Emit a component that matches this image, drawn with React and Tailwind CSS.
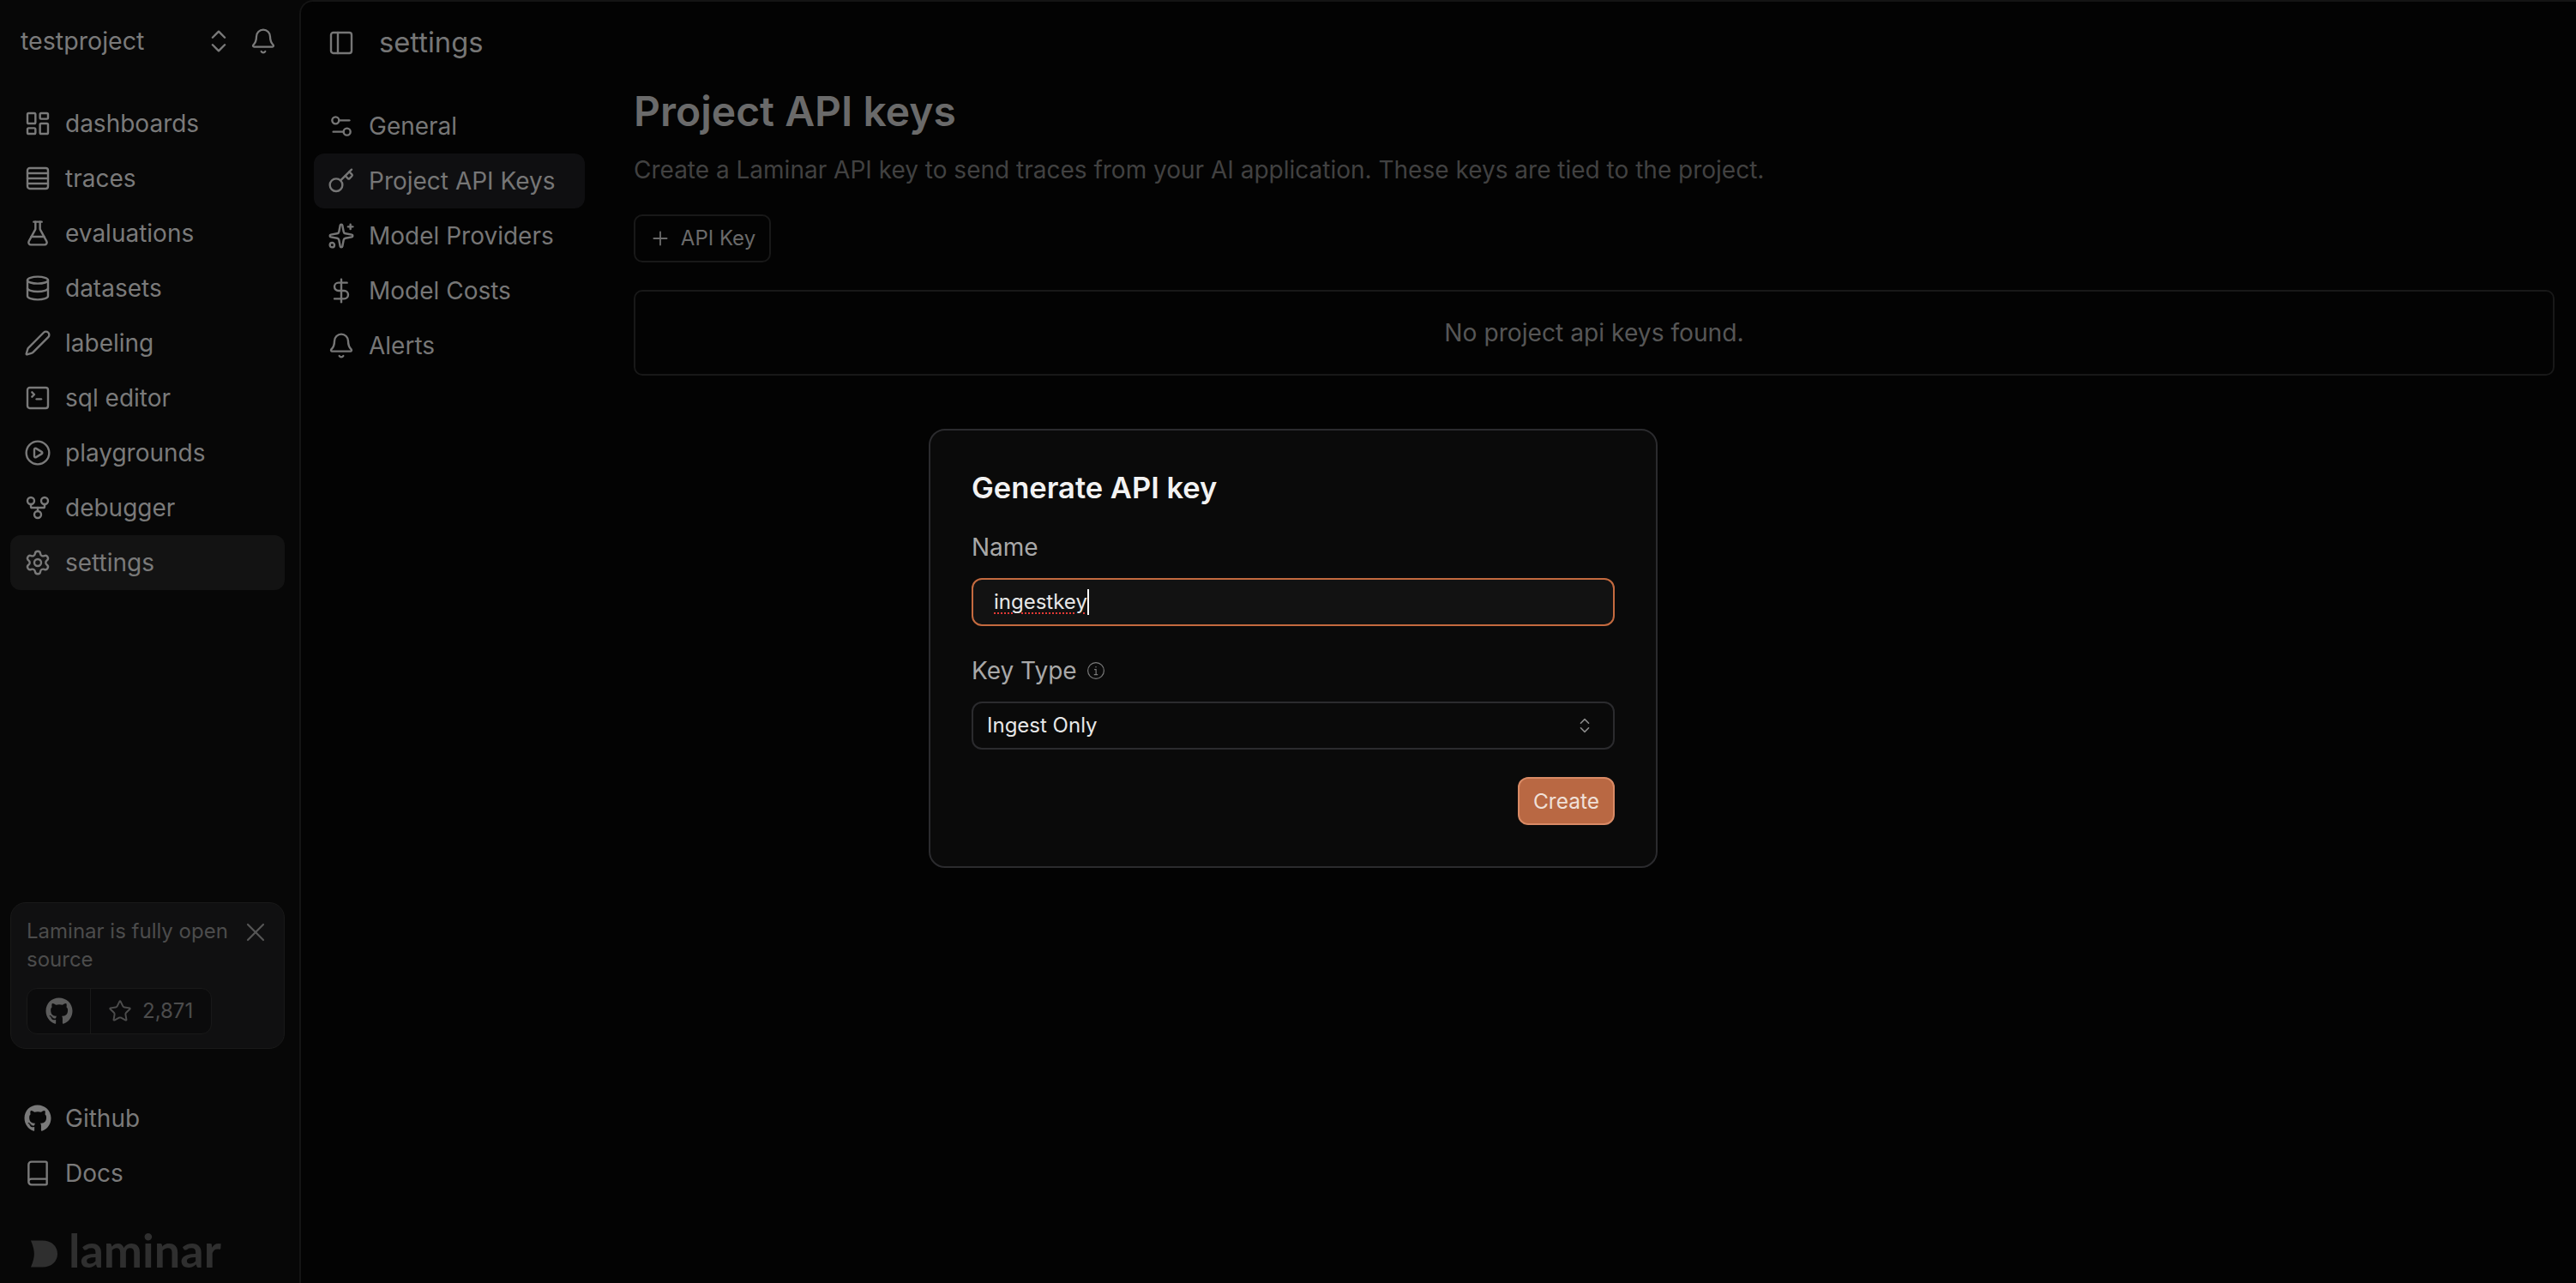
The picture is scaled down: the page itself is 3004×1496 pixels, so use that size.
import React from 'react';
import {
  LayoutDashboard, Rows4, FlaskConical, Database, Pen, SquareTerminal, CirclePlay, GitFork, Settings,
  Settings2, Key, Sparkles, DollarSign, Bell, PanelLeft, ChevronsUpDown, X, Star, Book, Plus,
} from 'lucide-react';
import { FaGithub } from 'react-icons/fa';

const navItems = [
  { label: 'dashboards', icon: LayoutDashboard },
  { label: 'traces', icon: Rows4 },
  { label: 'evaluations', icon: FlaskConical },
  { label: 'datasets', icon: Database },
  { label: 'labeling', icon: Pen },
  { label: 'sql editor', icon: SquareTerminal },
  { label: 'playgrounds', icon: CirclePlay },
  { label: 'debugger', icon: GitFork },
  { label: 'settings', icon: Settings, active: true },
];

const settingsItems = [
  { label: 'General', icon: Settings2 },
  { label: 'Project API Keys', icon: Key, active: true },
  { label: 'Model Providers', icon: Sparkles },
  { label: 'Model Costs', icon: DollarSign },
  { label: 'Alerts', icon: Bell },
];

function InfoIcon() {
  return (
    <svg width="22" height="22" viewBox="0 0 15 15" fill="none" stroke="currentColor" strokeWidth="0.8" className="text-[#7a7a7a]">
      <circle cx="7.5" cy="7.5" r="6.4" />
      <circle cx="7.5" cy="4.6" r="0.5" fill="currentColor" stroke="none" />
      <path d="M6.2 6.6h1.4v3.9M6 10.6h3" />
    </svg>
  );
}

function Sidebar() {
  return (
    <aside className="w-[349px] shrink-0 h-full flex flex-col bg-[#070707] text-[#7a7a7a]">
      <div className="h-[96px] flex items-center pl-[24px] pr-[26px]">
        <span className="text-[28.6px] flex-1">testproject</span>
        <ChevronsUpDown size={34} strokeWidth={1.7} className="mr-[19px]" />
        <Bell size={32} strokeWidth={1.7} />
      </div>
      <nav className="mt-[16px] px-[12px] flex flex-col">
        {navItems.map((item) => (
          <div
            key={item.label}
            className={`h-[64px] w-[320px] flex items-center gap-[16px] pl-[16px] rounded-[12px] text-[28px] ${item.active ? 'bg-[#131313]' : ''}`}
          >
            <item.icon size={32} strokeWidth={1.8} />
            <span>{item.label}</span>
          </div>
        ))}
      </nav>
      <div className="mt-auto">
        <div className="relative mx-[12px] w-[320px] h-[171px] rounded-[18px] border border-[#191919] bg-[#101011] px-[18px] pt-[16px]">
          <p className="text-[24px] leading-[33px] text-[#4c4c4c] w-[268px]">Laminar is fully open source</p>
          <X size={36} strokeWidth={1.5} className="absolute right-[15px] top-[16px] text-[#555]" />
          <div className="mt-[17px] w-[216px] h-[54px] flex items-center rounded-[12px] border border-[#191919] bg-[#0b0b0c] text-[#4c4c4c]">
            <div className="w-[74px] h-full flex items-center justify-center border-r border-[#191919]">
              <FaGithub size={32} className="text-[#5c5c5c]" />
            </div>
            <div className="flex items-center gap-[12px] pl-[20px] text-[24px]">
              <Star size={28} strokeWidth={1.7} />
              <span>2,871</span>
            </div>
          </div>
        </div>
        <div className="mt-[49px] px-[28px] flex flex-col">
          <div className="h-[64px] flex items-center gap-[16px] text-[28px]">
            <FaGithub size={32} />
            <span>Github</span>
          </div>
          <div className="h-[64px] flex items-center gap-[16px] text-[28px]">
            <Book size={32} strokeWidth={1.8} />
            <span>Docs</span>
          </div>
        </div>
        <div className="h-[96px] pl-[35px] pb-[11px] flex items-end gap-[12px] text-[#2f2f2f]">
          <svg width="33" height="34" viewBox="0 0 34 34" fill="currentColor" className="mb-[6px]">
            <path d="M1 1 H15 C26 1 33 8 33 17 C33 26 26 33 15 33 H1 C4 26 5 21 5 17 C5 13 4 8 1 1 Z" />
          </svg>
          <span className="text-[54px] leading-[54px] font-bold font-['Lato',sans-serif]">laminar</span>
        </div>
      </div>
    </aside>
  );
}

function SettingsNav() {
  return (
    <div className="w-[388px] shrink-0 pl-[15px] pt-[17px] flex flex-col">
      {settingsItems.map((item) => (
        <div
          key={item.label}
          className={`h-[64px] w-[316px] flex items-center gap-[16px] pl-[16px] rounded-[12px] text-[28px] text-[#767676] ${item.active ? 'bg-[#0f0f11]' : ''}`}
        >
          <item.icon size={32} strokeWidth={1.8} />
          <span>{item.label}</span>
        </div>
      ))}
    </div>
  );
}

function Content() {
  return (
    <div className="flex-1 pr-[25px] flex flex-col">
      <h1 className="text-[48px] leading-[64px] font-semibold text-[#6a6a6a]">Project API keys</h1>
      <p className="mt-[17px] text-[28px] leading-[38px] text-[#414141]">
        Create a Laminar API key to send traces from your AI application. These keys are tied to the project.
      </p>
      <button className="mt-[33px] w-[160px] h-[56px] flex items-center justify-center gap-[11px] rounded-[10px] border-2 border-[#181818] text-[#6a6a6a] text-[24px]">
        <Plus size={26} strokeWidth={1.7} />
        API Key
      </button>
      <div className="mt-[32px] h-[100px] rounded-[10px] border-2 border-[#181818] flex items-center justify-center text-[28.2px] text-[#565656]">
        No project api keys found.
      </div>
    </div>
  );
}

function ApiKeyDialog() {
  return (
    <div className="absolute left-[1083px] top-[500px] w-[850px] h-[512px] rounded-[19px] border-2 border-[#2b2b2e] bg-[#0a0a0a] px-[48px] pt-[44px]">
      <h2 className="text-[34.5px] leading-[46px] font-semibold text-[#f2f2f2]">Generate API key</h2>
      <label className="block mt-[27px] text-[28px] leading-[38px] text-[#a8a8a8]">Name</label>
      <div className="mt-[17px] h-[56px] rounded-[12px] border-2 border-[#c46a3f] bg-[#121212] pl-[24px] flex items-center text-[24px] text-[#e8e8e8]">
        <span className="underline decoration-dotted decoration-2 decoration-[#e53935] underline-offset-[4px]">ingestkey</span>
        <span className="w-[2px] h-[30px] bg-white" />
      </div>
      <div className="mt-[33px] flex items-center gap-[11px] text-[28px] leading-[38px] text-[#a8a8a8]">
        Key Type
        <InfoIcon />
      </div>
      <div className="mt-[17px] h-[56px] rounded-[12px] border-2 border-[#2b2b2e] flex items-center justify-between pl-[16px] pr-[22px] text-[24px] text-[#e8e8e8]">
        Ingest Only
        <ChevronsUpDown size={22} strokeWidth={1.7} className="text-[#8a8a8a]" />
      </div>
      <div className="mt-[32px] flex justify-end">
        <button className="w-[113px] h-[56px] rounded-[12px] border-2 border-[#d98a65] bg-[#b96843] text-[24.5px] text-[#f0e0d8]">Create</button>
      </div>
    </div>
  );
}

export default function App() {
  return (
    <div className="relative w-[3004px] h-[1496px] overflow-hidden flex bg-[#070707] font-['Inter',sans-serif]">
      <Sidebar />
      <main className="flex-1 h-full flex flex-col rounded-tl-[16px] border-l-2 border-t-2 border-[#141414] bg-[#030303]">
        <header className="h-[96px] shrink-0 flex items-center pl-[31px] gap-[28px] text-[#767676]">
          <PanelLeft size={32} strokeWidth={1.8} />
          <span className="text-[32.7px]">settings</span>
        </header>
        <div className="flex flex-1">
          <SettingsNav />
          <Content />
        </div>
      </main>
      <ApiKeyDialog />
    </div>
  );
}
